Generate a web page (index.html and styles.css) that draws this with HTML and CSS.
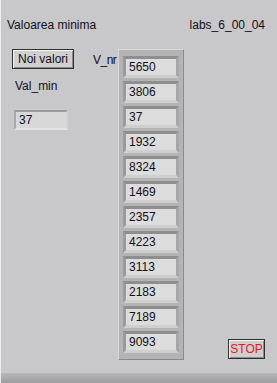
FILE: index.html
```html
<!DOCTYPE html>
<html lang="ro">
<head>
    <meta charset="UTF-8">
    <title>labs_6_00_04</title>
    <link rel="stylesheet" href="styles.css">
</head>
<body>
    <div class="panel">
        <div class="header">
            <span>Valoarea minima</span>
            <span>labs_6_00_04</span>
        </div>
        <div class="main">
            <div class="left">
                <button class="btn">Noi valori</button>
                <div class="label">Val_min</div>
                <div class="indicator">37</div>
            </div>
            <div class="label vnr">V_nr</div>
            <div class="array">
                <div class="cell">5650</div>
                <div class="cell">3806</div>
                <div class="cell">37</div>
                <div class="cell">1932</div>
                <div class="cell">8324</div>
                <div class="cell">1469</div>
                <div class="cell">2357</div>
                <div class="cell">4223</div>
                <div class="cell">3113</div>
                <div class="cell">2183</div>
                <div class="cell">7189</div>
                <div class="cell">9093</div>
            </div>
            <button class="btn stop">STOP</button>
        </div>
        <div class="footer"></div>
    </div>
</body>
</html>
```

FILE: styles.css
```css
body, html {
    margin: 0;
    padding: 0;
    width: 277px;
    height: 383px;
    overflow: hidden;
    font-family: 'Liberation Sans', Arial, sans-serif;
    font-size: 12px;
    color: #101018;
}
.panel {
    height: 383px;
    display: flex;
    flex-direction: column;
    background: #c8c7ca;
    border-left: 1px solid #ececec;
    box-sizing: border-box;
}
.header {
    display: flex;
    justify-content: space-between;
    padding: 18px 12px 0 6px;
    line-height: 14px;
}
.main {
    flex: 1;
    display: flex;
    padding: 17px 0 0 11px;
}
.left {
    display: flex;
    flex-direction: column;
    width: 81px;
}
.btn {
    font-family: inherit;
    font-size: 12px;
    color: #101018;
    background: #cfcfcf;
    border: 1px solid #303030;
    box-shadow: inset 1px 1px 0 #f4f4f4, inset -1px -1px 0 #8a8a8a;
    padding: 0 3px;
    height: 20px;
    line-height: 18px;
    width: 62px;
    margin: 0;
}
.label {
    line-height: 14px;
}
.left .label {
    margin: 10px 0 0 3px;
}
.indicator {
    margin: 17px 0 0 2px;
    width: 44px;
    height: 16px;
    line-height: 16px;
    padding: 0 3px;
    background: #d8d8d8;
    border: 2px solid;
    border-color: #9c9c9c #d4d4d4 #e4e4e4 #a8a8a8;
}
.vnr {
    margin-top: 4px;
    width: 25px;
    letter-spacing: -0.5px;
}
.array {
    display: flex;
    flex-direction: column;
    gap: 3px;
    padding: 6px 4px 6px 4px;
    background: #b4b3b6;
    border: 1px solid;
    border-color: #d8d8d8 #8a8a8a #8a8a8a #d8d8d8;
    margin-top: 0;
    align-self: flex-start;
}
.cell {
    width: 44px;
    height: 16px;
    line-height: 16px;
    padding: 0 3px;
    background: #dcdcdc;
    border: 3px solid;
    border-color: #8e8e8e #a6a6a6 #cfcfcf #9a9a9a;
}
.stop {
    align-self: flex-end;
    margin: 0 0 14px 44px;
    width: 37px;
    padding: 0;
    color: #ee1818;
}
.footer {
    height: 10px;
    background: linear-gradient(#b8b8b8, #9c9ca0);
}
```
